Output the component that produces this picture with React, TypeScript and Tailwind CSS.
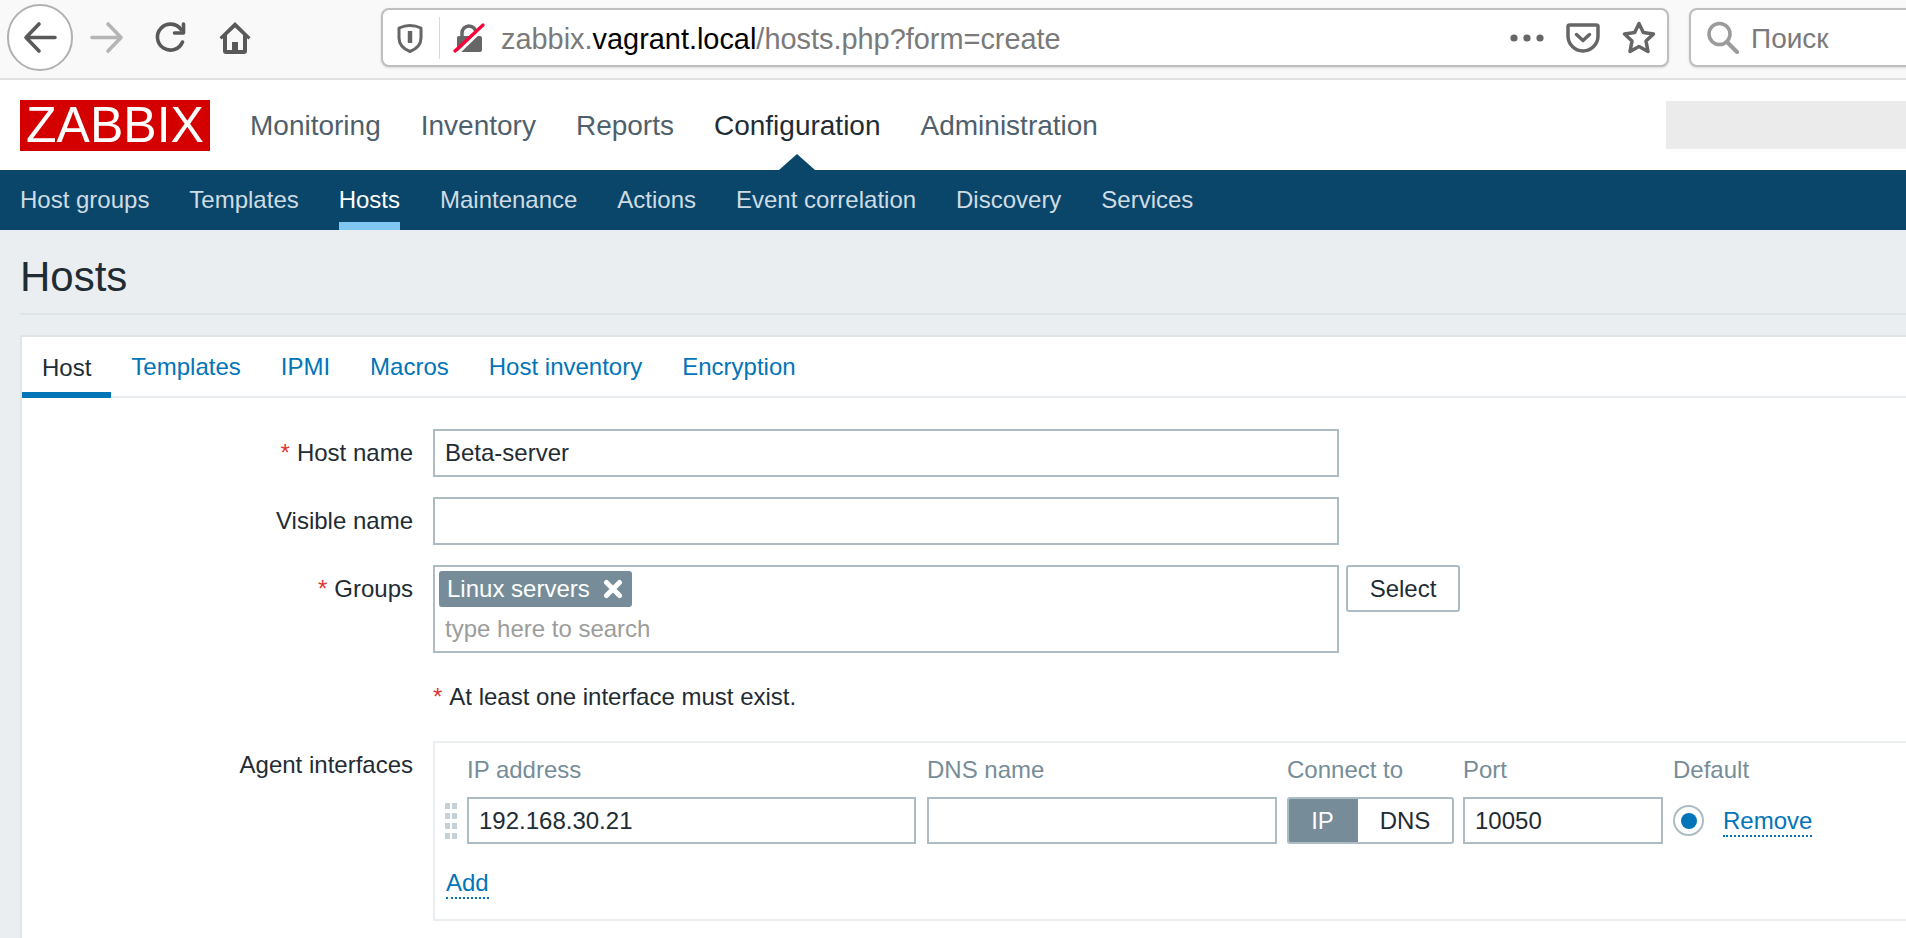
const topNav = ['Monitoring', 'Inventory', 'Reports', 'Configuration', 'Administration']
const subNav = ['Host groups', 'Templates', 'Hosts', 'Maintenance', 'Actions', 'Event correlation', 'Discovery', 'Services']
const tabs = ['Host', 'Templates', 'IPMI', 'Macros', 'Host inventory', 'Encryption']

function BrowserToolbar() {
  return (
    <div className="flex h-[78px] items-center pb-[3px] pl-[7px] bg-[#f9f9fa]">
      {/* Back */}
      <div className="flex h-[67px] w-[66px] items-center justify-center rounded-full border-2 border-[#b1b1b1] bg-white">
        <svg width="35" height="33" viewBox="0 0 35 33" fill="none" stroke="#595959" strokeWidth="3.6" strokeLinecap="round" strokeLinejoin="round">
          <path d="M16 3 3 16.5 16 30M3 16.5h29" />
        </svg>
      </div>
      {/* Forward */}
      <svg className="ml-[16px]" width="35" height="33" viewBox="0 0 35 33" fill="none" stroke="#b5b5b5" strokeWidth="3.6" strokeLinecap="round" strokeLinejoin="round">
        <path d="M19 3l13 13.5L19 30M32 16.5H3" />
      </svg>
      {/* Reload */}
      <svg className="ml-[30px]" width="34" height="33" viewBox="0 0 34 33" fill="none" stroke="#595959" strokeWidth="3.6" strokeLinecap="round" strokeLinejoin="round">
        <path d="M27 8.5A13 13 0 1 0 28.5 21" />
        <path d="M29.5 3v9h-9" />
      </svg>
      {/* Home */}
      <svg className="ml-[30px]" width="34" height="34" viewBox="0 0 34 34" fill="#595959">
        <path fillRule="evenodd" d="M17 1 1.5 16.2 3.6 18.5 5 17.2V30a3 3 0 0 0 3 3h18a3 3 0 0 0 3-3V17.2l1.4 1.3 2.1-2.3zM17 6.5 9 14v15h5v-8h6v8h5V14z" />
        <rect x="15.5" y="24" width="3" height="3" />
      </svg>

      {/* URL bar */}
      <div className="ml-[129px] flex h-[59px] w-[1288px] shrink-0 items-center rounded-[8px] border-2 border-[#bebebe] bg-white shadow-sm">
        <svg className="ml-[14px]" width="26" height="30" viewBox="0 0 26 30" fill="none" stroke="#666" strokeLinejoin="round">
          <path strokeWidth="3" d="M2 5Q13 0 24 5V15C24 22 18 26.500 13 28.500 8 26.500 2 22 2 15z" />
          <path strokeWidth="4.500" d="M13 8V20" />
        </svg>
        <div className="ml-[16px] h-[42px] w-[1px] bg-[#d8d8d8]" />
        <svg className="ml-[13px]" width="32" height="30" viewBox="0 0 32 30" fill="none">
          <path stroke="#666" strokeWidth="3.500" d="M9 15V10a7 7 0 0 1 14 0v5" />
          <rect x="4" y="13" width="25" height="16" rx="2" fill="#666" />
          <path stroke="#fff" strokeWidth="3" d="M4 31 32 4" />
          <path stroke="#ff0039" strokeWidth="3.200" strokeLinecap="round" d="M2 28 30 2" />
        </svg>
        <div className="ml-[16px] mt-[3px] text-[28.900px] leading-none text-[#7a7a7a] whitespace-nowrap">
          zabbix.<span className="text-black">vagrant.local</span>/hosts.php?form=create
        </div>
        <div className="ml-auto flex items-center">
          <svg width="34" height="8" viewBox="0 0 34 8" fill="#666">
            <circle cx="4" cy="4" r="3.600" />
            <circle cx="17" cy="4" r="3.600" />
            <circle cx="30" cy="4" r="3.600" />
          </svg>
          <svg className="ml-[22px]" width="34" height="30" viewBox="0 0 34 30" fill="none" stroke="#666" strokeWidth="3.500" strokeLinecap="round" strokeLinejoin="round">
            <path d="M2 3.500Q2 2 4 2H30Q32 2 32 3.500V13A15 15 0 0 1 2 13z" />
            <path d="M10.500 11.500 17 17.500 23.500 11.500" />
          </svg>
          <svg className="ml-[22px] mr-[11px]" width="34" height="33" viewBox="0 0 34 33" fill="none" stroke="#666" strokeWidth="3.500" strokeLinejoin="round">
            <path d="M17 2.500 21.300 11.500 31.500 13 24 20 26 30.500 17 25.500 8 30.500 10 20 2.500 13 12.700 11.500z" />
          </svg>
        </div>
      </div>

      {/* Search bar */}
      <div className="ml-[20px] -mr-[20px] flex h-[59px] flex-1 items-center rounded-[8px] border-2 border-[#bebebe] bg-white shadow-sm">
        <svg className="ml-[15px]" width="34" height="33" viewBox="0 0 34 33" fill="none" stroke="#9b9b9b" strokeLinecap="round">
          <circle cx="13.500" cy="13" r="10.500" strokeWidth="3.600" />
          <path strokeWidth="4" d="M21 21 31 31" />
        </svg>
        <span className="ml-[11px] mt-[3px] text-[28px] leading-none text-[#7a7a7a]">Поиск</span>
      </div>
    </div>
  )
}

function FormRow({ label, required, children }: { label: string; required?: boolean; children: React.ReactNode }) {
  return (
    <div className="flex">
      <div className="flex h-[48px] w-[391px] shrink-0 items-center justify-end">
        {required && <span className="mr-[7px] text-[#e33734]">*</span>}
        {label}
      </div>
      <div className="ml-[20px] flex-1">{children}</div>
    </div>
  )
}

function TextInput({ value, className }: { value?: string; className: string }) {
  return (
    <input
      readOnly
      value={value ?? ''}
      className={`block border-2 border-[#acbbc4] bg-white pl-[10px] text-[#1f2c33] outline-none ${className}`}
    />
  )
}

export default function App() {
  return (
    <div className="h-[938px] w-[1906px] overflow-hidden bg-[#ebeef0] font-['Liberation_Sans',Arial,sans-serif] text-[24px] text-[#1f2c33]">
      <BrowserToolbar />
      <div className="h-[2px] bg-[#e1e1e1]" />

      {/* Header */}
      <header className="flex h-[90px] items-center bg-white pl-[20px]">
        <div className="flex h-[51px] w-[190px] items-center justify-center bg-[#d40000] text-[50px] leading-none text-white">ZABBIX</div>
        <nav className="ml-[40px] mt-[2px] flex gap-[40px] text-[28px] leading-[32px] text-[#4f5f6b]">
          {topNav.map((item) => (
            <div key={item} className={item === 'Configuration' ? 'relative text-[#1f2c33]' : ''}>
              {item}
              {item === 'Configuration' && (
                <div className="absolute left-1/2 top-[44px] h-0 w-0 -translate-x-1/2 border-x-[18px] border-b-[16px] border-x-transparent border-b-[#0a466a]" />
              )}
            </div>
          ))}
        </nav>
        <div className="ml-auto h-[48px] w-[240px] bg-[#ebebeb]" />
      </header>

      {/* Sub navigation */}
      <nav className="flex h-[60px] gap-[39.950px] bg-[#0a466a] pl-[20px] text-[#d0dce4]">
        {subNav.map((item) => (
          <div
            key={item}
            className={
              item === 'Hosts'
                ? 'flex items-center border-y-[8px] border-t-transparent border-b-[#7fc6f2] text-white'
                : 'flex items-center'
            }
          >
            {item}
          </div>
        ))}
      </nav>

      {/* Title */}
      <div className="ml-[20px] h-[85px] border-b-2 border-[#dfe4e7] pt-[24px]">
        <h1 className="text-[42px] leading-[46px]">Hosts</h1>
      </div>

      {/* Card */}
      <div className="ml-[20px] mt-[20px] h-[700px] border-2 border-r-0 border-[#dfe4e7] bg-white">
        <div className="flex h-[61px] border-b-2 border-[#ebeef0] text-[#0275b8]">
          {tabs.map((tab, i) => (
            <div
              key={tab}
              className={
                i === 0
                  ? 'flex h-[61px] items-center border-b-[6px] border-[#0275b8] px-[20px] pt-[6px] text-[#1f2c33]'
                  : 'flex h-[59px] items-center px-[20px]'
              }
            >
              {tab}
            </div>
          ))}
        </div>

        <div className="flex flex-col gap-[20px] pt-[31px]">
          <FormRow label="Host name" required>
            <TextInput value="Beta-server" className="h-[48px] w-[906px]" />
          </FormRow>
          <FormRow label="Visible name">
            <TextInput className="h-[48px] w-[906px]" />
          </FormRow>
          <FormRow label="Groups" required>
            <div className="flex items-start gap-[7px]">
              <div className="h-[88px] w-[906px] border-2 border-[#acbbc4] pl-[4px] pt-[4px]">
                <div className="flex h-[36px] w-[193px] items-center justify-between rounded-[3px] bg-[#768d99] pl-[8px] pr-[9px] text-white">
                  Linux servers
                  <svg width="20" height="20" viewBox="0 0 20 20" fill="none" stroke="#fff" strokeWidth="5" strokeLinecap="round">
                    <path d="M3.500 3.500 16.500 16.500M16.500 3.500 3.500 16.500" />
                  </svg>
                </div>
                <input
                  readOnly
                  placeholder="type here to search"
                  className="mt-[6px] block h-[32px] w-[600px] pl-[6px] outline-none placeholder:text-[#9c9c9c]"
                />
              </div>
              <div className="flex h-[47px] w-[114px] items-center justify-center rounded-[3px] border-2 border-[#acbbc4]">Select</div>
            </div>
          </FormRow>
        </div>

        <div className="ml-[411px] mt-[28px] leading-[32px]">
          <span className="mr-[7px] text-[#e33734]">*</span>At least one interface must exist.
        </div>

        <div className="mt-[28px]">
          <FormRow label="Agent interfaces">
            <div className="h-[180px] border-2 border-r-0 border-[#ebeef0] pl-[10px] pt-[11px]">
              <div className="grid grid-cols-[12px_450px_350px_166px_200px_auto] items-center gap-x-[10px]">
                <div />
                {['IP address', 'DNS name', 'Connect to', 'Port', 'Default'].map((h) => (
                  <div key={h} className="mb-[11px] leading-[32px] text-[#768d99]">{h}</div>
                ))}

                {/* Drag handle */}
                <div className="grid grid-cols-2 gap-x-[2px] gap-y-[4px]">
                  {Array.from({ length: 8 }).map((_, i) => (
                    <div key={i} className="h-[6px] w-[5px] bg-[#c5d0d7]" />
                  ))}
                </div>
                <TextInput value="192.168.30.21" className="h-[47px] w-[449px]" />
                <TextInput className="h-[47px] w-full" />
                <div className="flex h-[47px] w-[167px] overflow-hidden rounded-[3px] border-2 border-[#acbbc4]">
                  <div className="-my-[2px] -ml-[2px] flex w-[71px] items-center justify-center bg-[#768d99] text-white">IP</div>
                  <div className="flex flex-1 items-center justify-center">DNS</div>
                </div>
                <TextInput value="10050" className="h-[47px] w-[200px]" />
                <div className="flex items-center">
                  <div className="flex h-[31px] w-[31px] items-center justify-center rounded-full border-2 border-[#acbbc4]">
                    <div className="h-[16px] w-[16px] rounded-full bg-[#0275b8]" />
                  </div>
                  <span className="ml-[19px] mt-[2px] border-b-2 border-dotted border-[#0275b8] leading-[28px] text-[#0275b8]">Remove</span>
                </div>
              </div>
              <span className="ml-[1px] mt-[25px] inline-block border-b-2 border-dotted border-[#0275b8] leading-[28px] text-[#0275b8]">Add</span>
            </div>
          </FormRow>
        </div>
      </div>
    </div>
  )
}
